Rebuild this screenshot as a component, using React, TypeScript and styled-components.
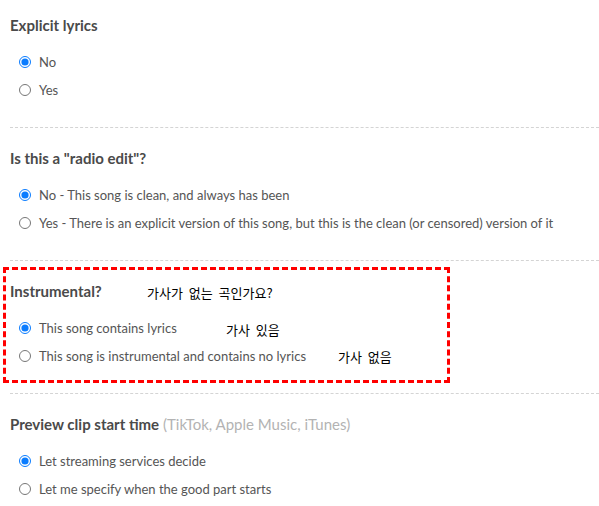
import React from "react";
import styled, { createGlobalStyle } from "styled-components";

const Global = createGlobalStyle`
  html, body { margin: 0; padding: 0; background: #fff; }
  body { font-family: Lato, "Open Sans", sans-serif; }
`;

const Page = styled.div`
  padding-left: 10px;
  width: 589px;
`;

const Section = styled.section`
  position: relative;
  padding: 21px 0 23px;
  border-bottom: 1px dashed #d4d4d4;
  &:first-child { padding-top: 16px; }
  &:last-child { border-bottom: none; }
`;

const Heading = styled.h3`
  margin: 0 0 14px;
  font-size: 15px;
  line-height: 18px;
  font-weight: 700;
  color: #4a4a4a;
`;

const Hint = styled.span`
  font-weight: 400;
  color: #b3b3b3;
`;

const Options = styled.div`
  display: flex;
  flex-direction: column;
`;

const Option = styled.label`
  display: flex;
  align-items: center;
  height: 28px;
  font-size: 13px;
  color: #555;
  cursor: pointer;
`;

const Radio = styled.input.attrs({ type: "radio" })`
  width: 12px;
  height: 12px;
  margin: 0 8px 0 9px;
  accent-color: #0a7cff;
`;

const Annotation = styled.div`
  position: absolute;
  left: -7px;
  top: 6px;
  width: 447px;
  height: 116px;
  box-sizing: border-box;
  border: 3px dashed #ff0000;
  pointer-events: none;
`;

const Note = styled.span<{ $x: number; $y: number }>`
  position: absolute;
  left: ${(p) => p.$x}px;
  top: ${(p) => p.$y}px;
  font-family: "Noto Sans CJK KR", sans-serif;
  font-size: 13px;
  line-height: 18px;
  word-spacing: 3px;
  color: #000;
  white-space: nowrap;
`;

type Q = {
  name: string;
  title: string;
  hint?: string;
  options: string[];
};

const questions: Q[] = [
  { name: "explicit", title: "Explicit lyrics", options: ["No", "Yes"] },
  {
    name: "radio",
    title: 'Is this a "radio edit"?',
    options: [
      "No - This song is clean, and always has been",
      "Yes - There is an explicit version of this song, but this is the clean (or censored) version of it",
    ],
  },
  {
    name: "instrumental",
    title: "Instrumental?",
    options: [
      "This song contains lyrics",
      "This song is instrumental and contains no lyrics",
    ],
  },
  {
    name: "preview",
    title: "Preview clip start time",
    hint: "(TikTok, Apple Music, iTunes)",
    options: [
      "Let streaming services decide",
      "Let me specify when the good part starts",
    ],
  },
];

export default function App() {
  return (
    <>
      <Global />
      <Page>
        {questions.map((q) => (
          <Section key={q.name}>
            <Heading>
              {q.title}
              {q.hint && <Hint> {q.hint}</Hint>}
            </Heading>
            <Options>
              {q.options.map((o, i) => (
                <Option key={o}>
                  <Radio name={q.name} defaultChecked={i === 0} />
                  {o}
                </Option>
              ))}
            </Options>
            {q.name === "instrumental" && (
              <Annotation>
                <Note $x={141} $y={14}>가사가 없는 곡인가요?</Note>
                <Note $x={220} $y={51}>가사 있음</Note>
                <Note $x={332} $y={78}>가사 없음</Note>
              </Annotation>
            )}
          </Section>
        ))}
      </Page>
    </>
  );
}
